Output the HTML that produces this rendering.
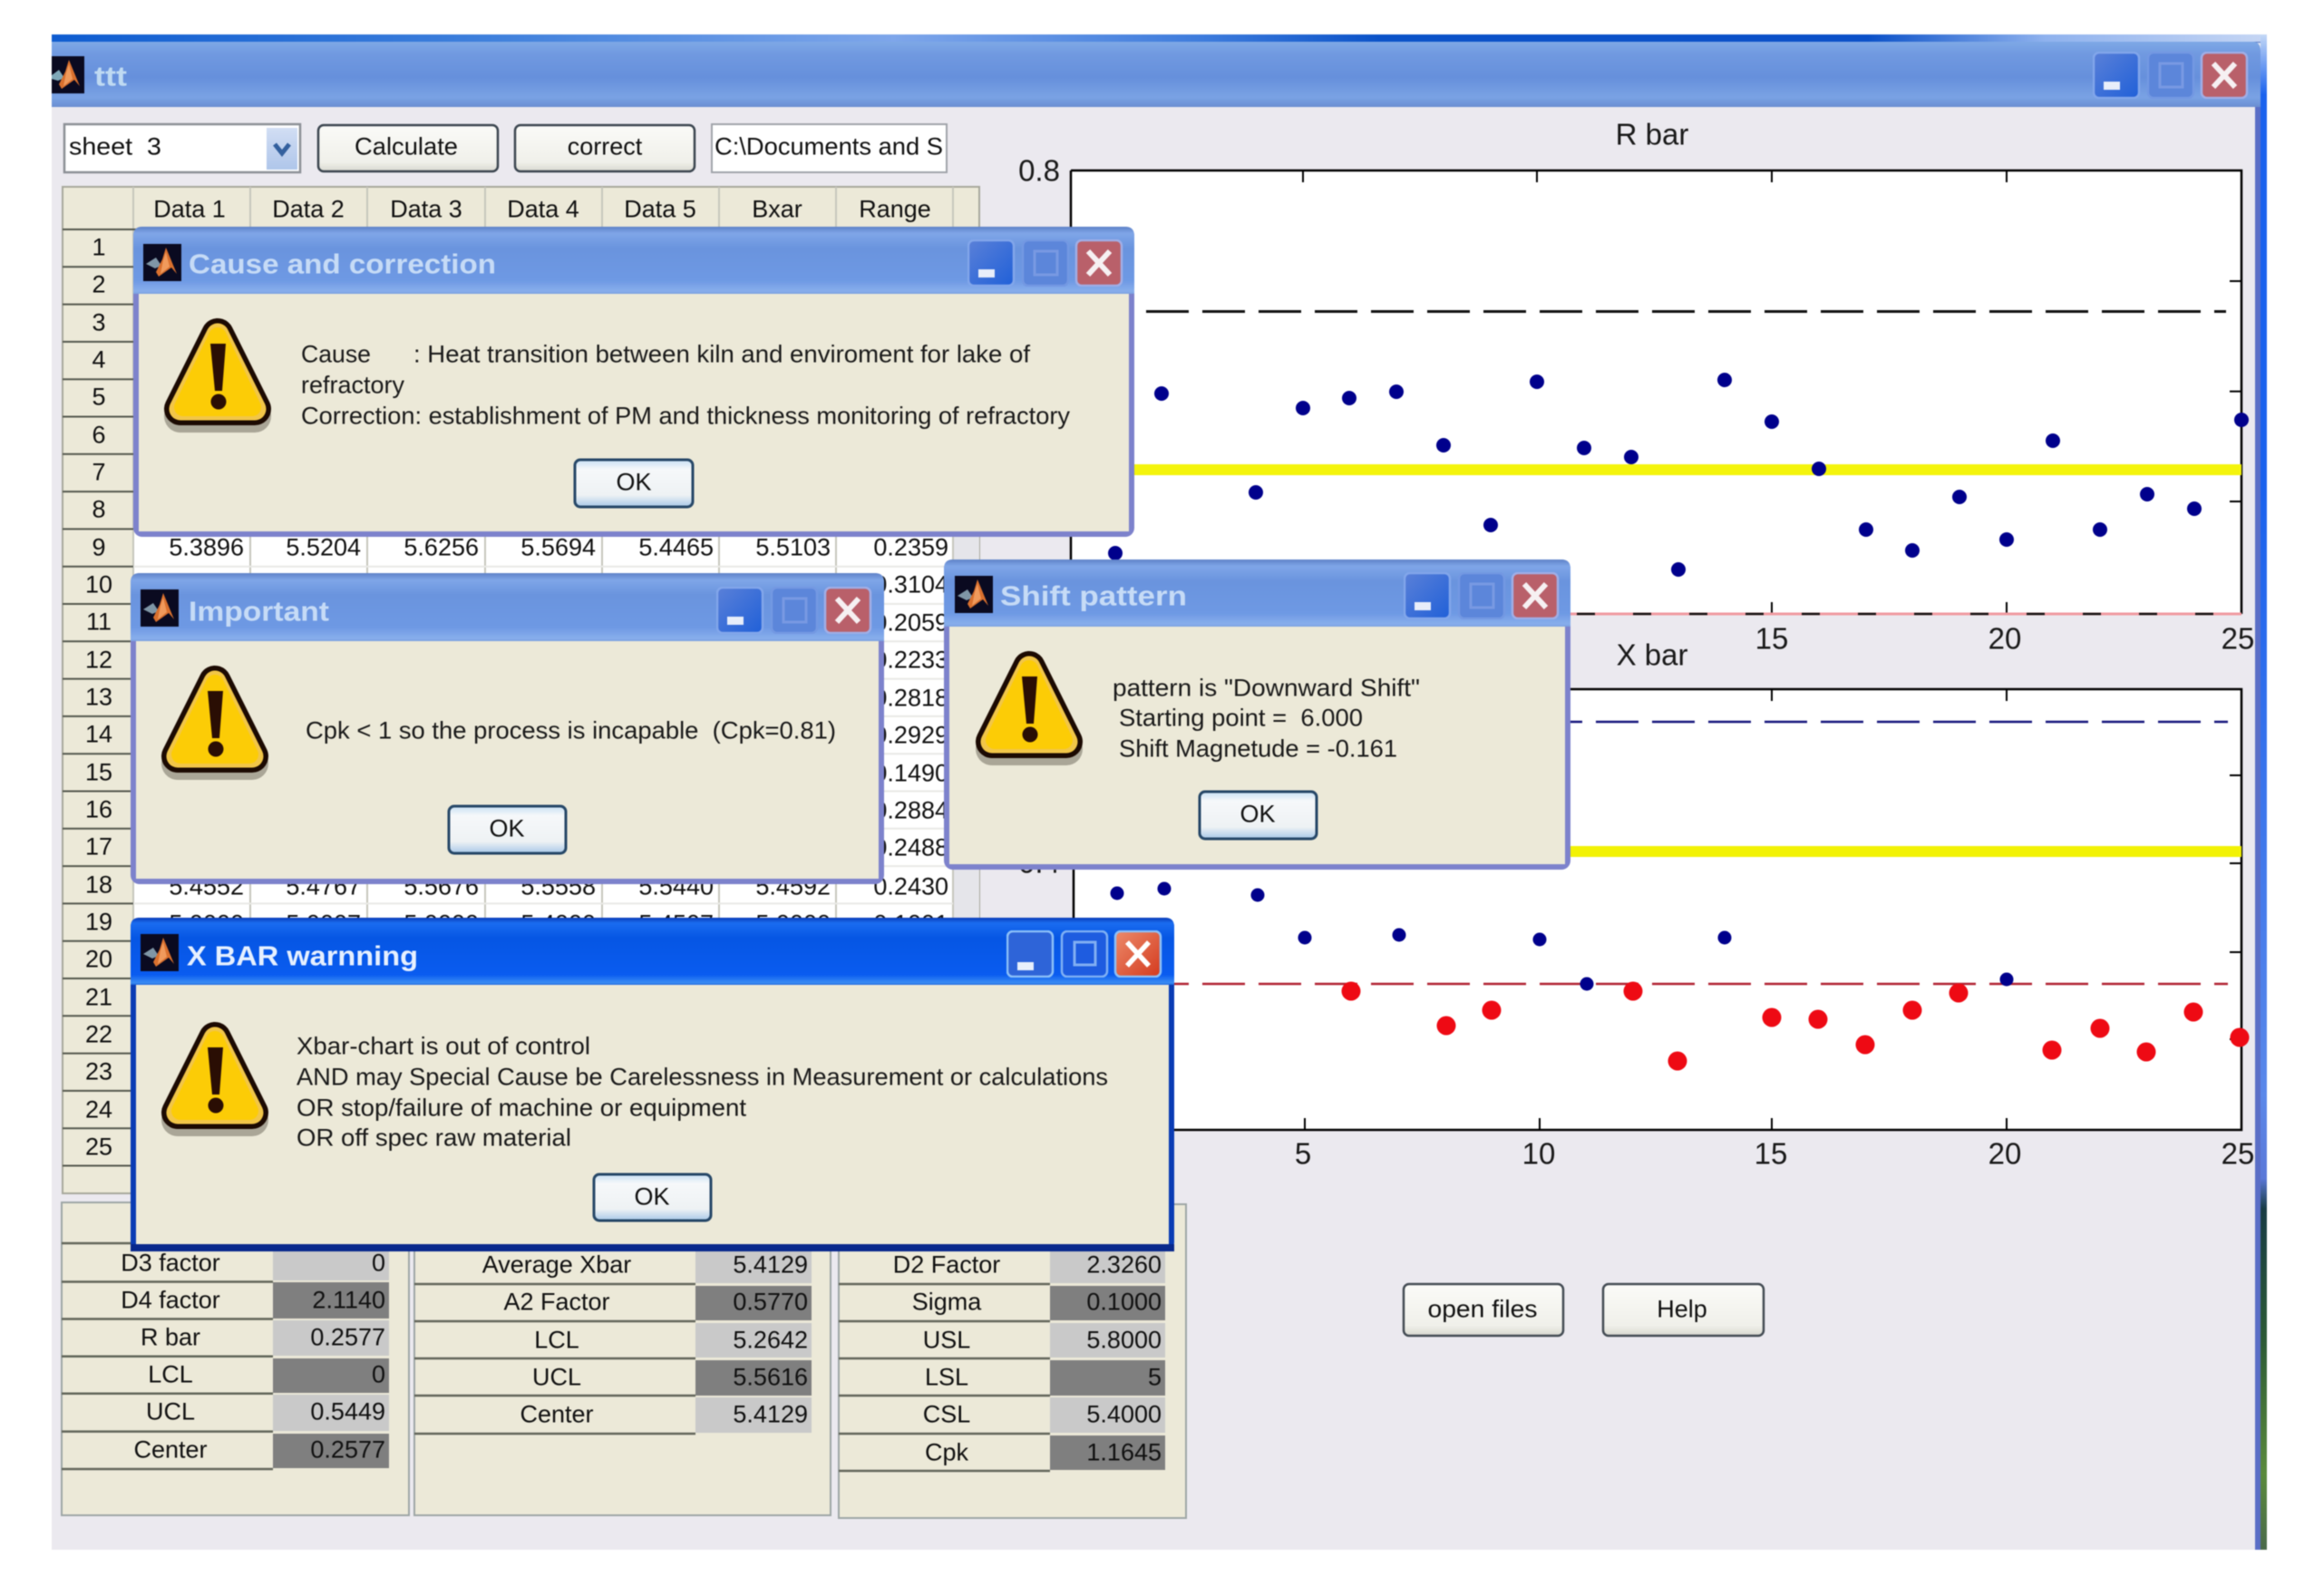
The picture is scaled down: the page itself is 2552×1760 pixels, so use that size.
<!DOCTYPE html>
<html><head><meta charset="utf-8"><title>ttt</title>
<style>
html,body{margin:0;padding:0;background:#fff}
svg{display:block;filter:blur(.5px)}
text{font-family:"Liberation Sans",sans-serif;fill:#111;transform:translateY(-1.5px)}
.t27{font-size:27px}
.m{font-size:27px;text-anchor:middle}
.r{font-size:27px;text-anchor:end}
.a{font-size:33px;text-anchor:middle;fill:#1a1a1a}
.d{font-size:27px;fill:#1a1a1a}
.tt{font-size:31px;font-weight:bold;fill:#c6dbf6}
</style></head><body>
<svg xmlns="http://www.w3.org/2000/svg" width="2552" height="1760" viewBox="0 0 2552 1760">
<defs>
<linearGradient id="strip" x1="0" x2="1" y1="0" y2="0">
<stop offset="0" stop-color="#0e5cd0"/><stop offset=".2" stop-color="#3f80dc"/><stop offset=".38" stop-color="#7ea6ea"/><stop offset=".52" stop-color="#3d7bdc"/><stop offset=".6" stop-color="#0a52c8"/><stop offset=".82" stop-color="#0a50c8"/><stop offset=".9" stop-color="#8fb2ee"/><stop offset="1" stop-color="#c6d6f4"/>
</linearGradient>
<linearGradient id="tMain" x1="0" x2="0" y1="0" y2="1">
<stop offset="0" stop-color="#7ea8e6"/><stop offset=".2" stop-color="#7099e0"/><stop offset=".55" stop-color="#6690dc"/><stop offset=".85" stop-color="#7aa2e4"/><stop offset="1" stop-color="#6a8ed2"/>
</linearGradient>
<linearGradient id="tFade" x1="0" x2="0" y1="0" y2="1">
<stop offset="0" stop-color="#5f82c8"/><stop offset=".1" stop-color="#7fa6e8"/><stop offset=".32" stop-color="#6a94de"/><stop offset=".8" stop-color="#6e99e4"/><stop offset=".96" stop-color="#88aeec"/><stop offset="1" stop-color="#7ba0e0"/>
</linearGradient>
<linearGradient id="tAct" x1="0" x2="0" y1="0" y2="1">
<stop offset="0" stop-color="#0a3cb8"/><stop offset=".08" stop-color="#1a6cf0"/><stop offset=".3" stop-color="#0656e4"/><stop offset=".85" stop-color="#0a5cf0"/><stop offset=".97" stop-color="#3a8cf4"/><stop offset="1" stop-color="#1e66dc"/>
</linearGradient>
<linearGradient id="btn" x1="0" x2="0" y1="0" y2="1">
<stop offset="0" stop-color="#fbfbf8"/><stop offset=".8" stop-color="#f0f0ea"/><stop offset="1" stop-color="#d8d8d0"/>
</linearGradient>
<linearGradient id="ok" x1="0" x2="0" y1="0" y2="1">
<stop offset="0" stop-color="#c8e0f4"/><stop offset=".2" stop-color="#f6f8fa"/><stop offset=".75" stop-color="#eef2f4"/><stop offset="1" stop-color="#a8c8e8"/>
</linearGradient>
<linearGradient id="minF" x1="0" x2="1" y1="0" y2="1">
<stop offset="0" stop-color="#5a80d8"/><stop offset="1" stop-color="#2060d8"/>
</linearGradient>
<linearGradient id="closeA" x1="0" x2="1" y1="0" y2="1">
<stop offset="0" stop-color="#ec8a6a"/><stop offset="1" stop-color="#d43a1e"/>
</linearGradient>
<linearGradient id="edge" x1="0" x2="0" y1="0" y2="1">
<stop offset="0" stop-color="#c4d8f6"/><stop offset=".04" stop-color="#1a62ee"/><stop offset=".3" stop-color="#1a62ee"/><stop offset=".7" stop-color="#5a88ea"/><stop offset=".755" stop-color="#5a78d8"/><stop offset=".775" stop-color="#183c44"/><stop offset=".86" stop-color="#2c5a36"/><stop offset=".95" stop-color="#5a8a3c"/><stop offset="1" stop-color="#4a6a4a"/>
</linearGradient>
<linearGradient id="chev" x1="0" x2="0" y1="0" y2="1">
<stop offset="0" stop-color="#d2def4"/><stop offset="1" stop-color="#afc6ea"/>
</linearGradient>
<symbol id="warn" viewBox="0 0 124 130" width="124" height="130" overflow="visible">
<path d="M59 25L18 108H100Z" fill="#8f8b7c" stroke="#8f8b7c" stroke-width="36" stroke-linejoin="round" opacity=".7"/>
<path d="M59 18L18 100H100Z" fill="#1c0a02" stroke="#1c0a02" stroke-width="36" stroke-linejoin="round"/>
<path d="M59 18L18 100H100Z" fill="#f2c648" stroke="#f2c648" stroke-width="25" stroke-linejoin="round"/>
<path d="M59 20L21 98H97Z" fill="#fccc06" stroke="#fccc06" stroke-width="20" stroke-linejoin="round"/>
<path d="M51 28H68L64 80H56Z" fill="#2a0e04"/>
<circle cx="60" cy="92" r="8.5" fill="#2a0e04"/>
</symbol>
<symbol id="logo" viewBox="0 0 42 41" width="42" height="41">
<rect width="42" height="41" fill="#0a0a20"/>
<path d="M3 22L14 15L20 24L13 27Z" fill="#7f96a6"/>
<path d="M25 4L37 33L31 26L17 36L14 31L21 17Z" fill="#d9702e"/>
<path d="M25 9L29 25L19 33L22 18Z" fill="#f09a5c"/>
</symbol>
<symbol id="logoC" viewBox="6 0 36 41" width="36" height="41">
<rect x="0" width="42" height="41" fill="#0a0a20"/>
<path d="M6 21L14 15L20 24L13 27L6 25Z" fill="#7fa8b8"/>
<path d="M25 4L37 33L31 26L17 36L14 31L21 17Z" fill="#d9702e"/>
<path d="M25 9L29 25L19 33L22 18Z" fill="#f09a5c"/>
</symbol>
<symbol id="ctlF" viewBox="0 0 172 52" width="172" height="52">
<rect x="1" y="1" width="50" height="50" rx="6" fill="url(#minF)" stroke="#82a6ea" stroke-width="2.5"/>
<rect x="12" y="33" width="18" height="9" fill="#e8eefa"/>
<rect x="61" y="1" width="50" height="50" rx="6" fill="#5c86da" stroke="#7398e2" stroke-width="2.5"/>
<rect x="74" y="13" width="25" height="26" fill="none" stroke="#7899e2" stroke-width="3"/>
<rect x="120" y="1" width="50" height="50" rx="6" fill="#b9606a" stroke="#a0aee6" stroke-width="2.5"/>
<path d="M133 13L157 39M157 13L133 39" stroke="#f6f0f2" stroke-width="6" fill="none"/>
</symbol>
<symbol id="ctlA" viewBox="0 0 172 52" width="172" height="52">
<rect x="1" y="1" width="50" height="50" rx="6" fill="#2e64d8" stroke="#8cc0f8" stroke-width="2.5"/>
<rect x="12" y="35" width="18" height="9" fill="#e8f0fc"/>
<rect x="61" y="1" width="50" height="50" rx="6" fill="#1e5ce0" stroke="#7fb0f4" stroke-width="2.5"/>
<rect x="75" y="13" width="23" height="25" fill="none" stroke="#80aef2" stroke-width="3"/>
<rect x="120" y="1" width="50" height="50" rx="6" fill="url(#closeA)" stroke="#8cc0f8" stroke-width="2.5"/>
<path d="M133 13L157 39M157 13L133 39" stroke="#fff" stroke-width="5.5" fill="none"/>
</symbol>
</defs>

<!-- main window -->
<rect x="57" y="38" width="2443" height="1671" fill="#ebe9ef"/>
<rect x="57" y="38" width="2443" height="10" fill="url(#strip)"/>
<rect x="2493" y="38" width="7" height="1671" fill="url(#edge)"/>
<rect x="57" y="46" width="2436" height="1" fill="#5a7cc4"/>
<path d="M57 46H2484Q2493 46 2493 56V118H57Z" fill="url(#tMain)"/>
<use href="#logoC" x="57" y="62"/>
<text x="104" y="96" font-size="31" font-weight="bold" style="fill:#bfdaf2" textLength="36" lengthAdjust="spacingAndGlyphs">ttt</text>
<use href="#ctlF" x="2308" y="57"/>

<!-- top controls -->
<rect x="71" y="137" width="260" height="53" fill="#fff" stroke="#8c9096" stroke-width="2.5"/>
<text x="76" y="172" class="t27" textLength="102" lengthAdjust="spacingAndGlyphs" xml:space="preserve">sheet  3</text>
<rect x="294" y="141" width="34" height="46" fill="url(#chev)"/>
<path d="M303 159L311 169L319 159" fill="none" stroke="#33609e" stroke-width="5"/>
<rect x="351" y="138" width="198" height="51" rx="6" fill="url(#btn)" stroke="#3c4650" stroke-width="2.5"/>
<text x="448" y="172" class="m" textLength="114" lengthAdjust="spacingAndGlyphs">Calculate</text>
<rect x="568" y="138" width="198" height="51" rx="6" fill="url(#btn)" stroke="#3c4650" stroke-width="2.5"/>
<text x="667" y="172" class="m">correct</text>
<rect x="785" y="137" width="259" height="53" fill="#fff" stroke="#a0a4aa" stroke-width="2"/>
<text x="788" y="172" class="t27" textLength="252" lengthAdjust="spacingAndGlyphs">C:\Documents and S</text>

<!-- table -->
<rect x="69" y="206" width="1011" height="1110" fill="#ece9d8" stroke="#a8a89c" stroke-width="2"/>
<rect x="147" y="254" width="904" height="1032" fill="#fff"/>
<rect x="1051" y="254" width="29" height="1032" fill="#e5e5ea"/>
<path d="M147 206V1316M276 206V1286M405 206V1286M535 206V1286M664 206V1286M793 206V1286M922 206V1286M1051 206V1286" stroke="#c6c6bc" stroke-width="2" fill="none"/>
<path d="M147 624.7H1051M147 666H1051M147 707.3H1051M147 748.6H1051M147 789.9H1051M147 831.2H1051M147 872.5H1051M147 913.8H1051M147 955.1H1051M147 996.4H1051" stroke="#e9e9e6" stroke-width="2" fill="none"/>
<path d="M69 253H1080M69 294.3H147M69 335.6H147M69 376.9H147M69 418.2H147M69 459.5H147M69 500.8H147M69 542.1H147M69 583.4H147M69 624.7H147M69 666H147M69 707.3H147M69 748.6H147M69 789.9H147M69 831.2H147M69 872.5H147M69 913.8H147M69 955.1H147M69 996.4H147M69 1037.7H147M69 1079H147M69 1120.3H147M69 1161.6H147M69 1202.9H147M69 1244.2H147M69 1285.5H147" stroke="#54584e" stroke-width="2" fill="none"/>
<text x="209" y="241" class="m">Data 1</text><text x="340" y="241" class="m">Data 2</text><text x="470" y="241" class="m">Data 3</text><text x="599" y="241" class="m">Data 4</text><text x="728" y="241" class="m">Data 5</text><text x="857" y="241" class="m">Bxar</text><text x="987" y="241" class="m">Range</text>
<g class="rows">
<text x="109" y="283" class="m">1</text><text x="109" y="324" class="m">2</text><text x="109" y="366" class="m">3</text><text x="109" y="407" class="m">4</text><text x="109" y="448" class="m">5</text><text x="109" y="490" class="m">6</text><text x="109" y="531" class="m">7</text><text x="109" y="572" class="m">8</text><text x="109" y="614" class="m">9</text><text x="109" y="655" class="m">10</text><text x="109" y="696" class="m">11</text><text x="109" y="738" class="m">12</text><text x="109" y="779" class="m">13</text><text x="109" y="820" class="m">14</text><text x="109" y="862" class="m">15</text><text x="109" y="903" class="m">16</text><text x="109" y="944" class="m">17</text><text x="109" y="986" class="m">18</text><text x="109" y="1027" class="m">19</text><text x="109" y="1068" class="m">20</text><text x="109" y="1110" class="m">21</text><text x="109" y="1151" class="m">22</text><text x="109" y="1192" class="m">23</text><text x="109" y="1234" class="m">24</text><text x="109" y="1275" class="m">25</text>
</g>
<text x="269" y="614" class="r">5.3896</text><text x="398" y="614" class="r">5.5204</text><text x="528" y="614" class="r">5.6256</text><text x="657" y="614" class="r">5.5694</text><text x="787" y="614" class="r">5.4465</text><text x="916" y="614" class="r">5.5103</text><text x="1046" y="614" class="r">0.2359</text>
<text x="1046" y="655" class="r">0.3104</text><text x="1046" y="697" class="r">0.2059</text><text x="1046" y="738" class="r">0.2233</text><text x="1046" y="780" class="r">0.2818</text><text x="1046" y="821" class="r">0.2929</text><text x="1046" y="863" class="r">0.1490</text><text x="1046" y="904" class="r">0.2884</text><text x="1046" y="945" class="r">0.2488</text>
<text x="269" y="988" class="r">5.4552</text><text x="398" y="988" class="r">5.4767</text><text x="528" y="988" class="r">5.5676</text><text x="657" y="988" class="r">5.5558</text><text x="787" y="988" class="r">5.5440</text><text x="916" y="988" class="r">5.4592</text><text x="1046" y="988" class="r">0.2430</text>
<text x="269" y="1029" class="r">5.0000</text><text x="398" y="1029" class="r">5.0007</text><text x="528" y="1029" class="r">5.0000</text><text x="657" y="1029" class="r">5.4000</text><text x="787" y="1029" class="r">5.4507</text><text x="916" y="1029" class="r">5.0000</text><text x="1046" y="1029" class="r">0.1001</text>

<!-- bottom panels -->
<rect x="68" y="1326" width="383" height="345" fill="#ece9d8" stroke="#9ea6a6" stroke-width="2"/>
<rect x="457" y="1326" width="459" height="345" fill="#ece9d8" stroke="#9ea6a6" stroke-width="2"/>
<rect x="925" y="1328" width="383" height="346" fill="#ece9d8" stroke="#9ea6a6" stroke-width="2"/>
<g>
<rect x="301" y="1371" width="128" height="41" fill="#c9c9c9"/><rect x="301" y="1414" width="128" height="40" fill="#7f7f7f"/><rect x="301" y="1456" width="128" height="39" fill="#c9c9c9"/><rect x="301" y="1498" width="128" height="38" fill="#7f7f7f"/><rect x="301" y="1538" width="128" height="40" fill="#c9c9c9"/><rect x="301" y="1581" width="128" height="38" fill="#7f7f7f"/>
<path d="M68 1371H301M68 1413.5H301M68 1454.5H301M68 1495.7H301M68 1536.8H301M68 1578.6H301M68 1620H301" stroke="#62665a" stroke-width="2.5" fill="none"/>
<text x="188" y="1403" class="m">D3 factor</text><text x="188" y="1444" class="m">D4 factor</text><text x="188" y="1485" class="m">R bar</text><text x="188" y="1526" class="m">LCL</text><text x="188" y="1567" class="m">UCL</text><text x="188" y="1609" class="m">Center</text>
<text x="425" y="1403" class="r">0</text><text x="425" y="1444" class="r">2.1140</text><text x="425" y="1485" class="r">0.2577</text><text x="425" y="1526" class="r">0</text><text x="425" y="1567" class="r">0.5449</text><text x="425" y="1609" class="r">0.2577</text>

<rect x="767" y="1375" width="128" height="40" fill="#c9c9c9"/><rect x="767" y="1418" width="128" height="38" fill="#7f7f7f"/><rect x="767" y="1459" width="128" height="38" fill="#c9c9c9"/><rect x="767" y="1500" width="128" height="39" fill="#7f7f7f"/><rect x="767" y="1541" width="128" height="39" fill="#c9c9c9"/>
<path d="M457 1416H767M457 1457H767M457 1498H767M457 1539H767M457 1581H767" stroke="#62665a" stroke-width="2.5" fill="none"/>
<text x="614" y="1405" class="m">Average Xbar</text><text x="614" y="1446" class="m">A2 Factor</text><text x="614" y="1488" class="m">LCL</text><text x="614" y="1529" class="m">UCL</text><text x="614" y="1570" class="m">Center</text>
<text x="891" y="1405" class="r">5.4129</text><text x="891" y="1446" class="r">0.5770</text><text x="891" y="1488" class="r">5.2642</text><text x="891" y="1529" class="r">5.5616</text><text x="891" y="1570" class="r">5.4129</text>

<rect x="1158" y="1375" width="127" height="40" fill="#c9c9c9"/><rect x="1158" y="1418" width="127" height="38" fill="#7f7f7f"/><rect x="1158" y="1459" width="127" height="38" fill="#c9c9c9"/><rect x="1158" y="1500" width="127" height="39" fill="#7f7f7f"/><rect x="1158" y="1541" width="127" height="39" fill="#c9c9c9"/><rect x="1158" y="1583" width="127" height="38" fill="#7f7f7f"/>
<path d="M925 1416H1158M925 1457H1158M925 1498H1158M925 1539H1158M925 1581H1158M925 1622H1158" stroke="#62665a" stroke-width="2.5" fill="none"/>
<text x="1044" y="1405" class="m">D2 Factor</text><text x="1044" y="1446" class="m">Sigma</text><text x="1044" y="1488" class="m">USL</text><text x="1044" y="1529" class="m">LSL</text><text x="1044" y="1570" class="m">CSL</text><text x="1044" y="1612" class="m">Cpk</text>
<text x="1281" y="1405" class="r">2.3260</text><text x="1281" y="1446" class="r">0.1000</text><text x="1281" y="1488" class="r">5.8000</text><text x="1281" y="1529" class="r">5</text><text x="1281" y="1570" class="r">5.4000</text><text x="1281" y="1612" class="r">1.1645</text>
</g>

<!-- R bar chart -->
<text x="1822" y="161" class="a">R bar</text>
<text x="1146" y="201" class="a">0.8</text>
<rect x="1181" y="188" width="1291" height="489" fill="#fff"/>
<path d="M1181 188H2472V677M1181 188V677" fill="none" stroke="#000" stroke-width="2.5"/>
<path d="M1437 188V201M1695 188V201M1954 188V201M2213 188V201M1954 677V664M2213 677V664M2472 310H2459M2472 431.6H2459M2472 553H2459" stroke="#000" stroke-width="2" fill="none"/>
<path d="M1190 343.5H2455" stroke="#111" stroke-width="3" stroke-dasharray="47 15" stroke-dashoffset="-12" fill="none"/>
<rect x="1181" y="512" width="1291" height="12" fill="#f4f40c"/>
<path d="M1181 677H2472" stroke="#f09aa0" stroke-width="3" fill="none"/>
<path d="M1181 677H2472" stroke="#111" stroke-width="2.5" stroke-dasharray="20 42" fill="none"/>
<g fill="#00008c">
<circle cx="1230" cy="610" r="8"/><circle cx="1281" cy="434" r="8"/><circle cx="1385" cy="543" r="8"/><circle cx="1437" cy="450" r="8"/><circle cx="1488" cy="439" r="8"/><circle cx="1540" cy="432" r="8"/><circle cx="1592" cy="491" r="8"/><circle cx="1644" cy="579" r="8"/><circle cx="1695" cy="421" r="8"/><circle cx="1747" cy="494" r="8"/><circle cx="1799" cy="504" r="8"/><circle cx="1851" cy="628" r="8"/><circle cx="1902" cy="419" r="8"/><circle cx="1954" cy="465" r="8"/><circle cx="2006" cy="517" r="8"/><circle cx="2058" cy="584" r="8"/><circle cx="2109" cy="607" r="8"/><circle cx="2161" cy="548" r="8"/><circle cx="2213" cy="595" r="8"/><circle cx="2264" cy="486" r="8"/><circle cx="2316" cy="584" r="8"/><circle cx="2368" cy="545" r="8"/><circle cx="2420" cy="561" r="8"/><circle cx="2472" cy="463" r="8"/>
</g>
<text x="1954" y="717" class="a">15</text><text x="2211" y="717" class="a">20</text><text x="2468" y="717" class="a">25</text>

<!-- X bar chart -->
<text x="1822" y="735" class="a">X bar</text>
<text x="1146" y="964" class="a">0.4</text>
<rect x="1184" y="760" width="1288" height="486" fill="#fff"/>
<path d="M1184 760H2472V1246H1184Z" fill="none" stroke="#000" stroke-width="2.5"/>
<path d="M1439 1246V1233M1698 1246V1233M1954 1246V1233M2213 1246V1233M1954 760V773M2213 760V773M2472 855H2459M2472 952H2459M2472 1050H2459M2472 1146H2459" stroke="#000" stroke-width="2" fill="none"/>
<path d="M1190 796H2457" stroke="#14147c" stroke-width="2.5" stroke-dasharray="47 15" stroke-dashoffset="-12" fill="none"/>
<rect x="1184" y="933" width="1288" height="12" fill="#f2f204"/>
<path d="M1190 1085H2457" stroke="#b02030" stroke-width="2.5" stroke-dasharray="47 15" stroke-dashoffset="-12" fill="none"/>
<g fill="#00008c">
<circle cx="1232" cy="985" r="7.5"/><circle cx="1284" cy="980" r="7.5"/><circle cx="1387" cy="987" r="7.5"/><circle cx="1439" cy="1034" r="7.5"/><circle cx="1543" cy="1031" r="7.5"/><circle cx="1698" cy="1036" r="7.5"/><circle cx="1750" cy="1085" r="7.5"/><circle cx="1902" cy="1034" r="7.5"/><circle cx="2213" cy="1080" r="7.5"/>
</g>
<g fill="#ee0a14">
<circle cx="1490" cy="1093" r="10.5"/><circle cx="1595" cy="1131" r="10.5"/><circle cx="1645" cy="1114" r="10.5"/><circle cx="1801" cy="1093" r="10.5"/><circle cx="1850" cy="1170" r="10.5"/><circle cx="1954" cy="1122" r="10.5"/><circle cx="2005" cy="1124" r="10.5"/><circle cx="2057" cy="1152" r="10.5"/><circle cx="2109" cy="1114" r="10.5"/><circle cx="2160" cy="1095" r="10.5"/><circle cx="2263" cy="1158" r="10.5"/><circle cx="2316" cy="1134" r="10.5"/><circle cx="2367" cy="1160" r="10.5"/><circle cx="2419" cy="1116" r="10.5"/><circle cx="2470" cy="1144" r="10.5"/>
</g>
<text x="1437" y="1285" class="a">5</text><text x="1697" y="1285" class="a">10</text><text x="1953" y="1285" class="a">15</text><text x="2211" y="1285" class="a">20</text><text x="2468" y="1285" class="a">25</text>
<rect x="2487" y="118" width="6" height="1591" fill="#5a6ec6"/>

<!-- bottom right buttons -->
<rect x="1548" y="1416" width="176" height="57" rx="6" fill="url(#btn)" stroke="#444c54" stroke-width="2.5"/>
<text x="1635" y="1454" class="m" textLength="121" lengthAdjust="spacingAndGlyphs">open files</text>
<rect x="1768" y="1416" width="177" height="57" rx="6" fill="url(#btn)" stroke="#444c54" stroke-width="2.5"/>
<text x="1855" y="1454" class="m">Help</text>

<!-- Cause and correction -->
<rect x="147" y="250" width="1104" height="342" rx="10" fill="#7d82cc"/>
<rect x="153" y="324" width="1092" height="262" fill="#ece9d8"/>
<path d="M147 324V260Q147 250 157 250H1241Q1251 250 1251 260V324Z" fill="url(#tFade)"/>
<use href="#logo" x="158" y="269"/>
<text x="208" y="303" class="tt" textLength="339" lengthAdjust="spacingAndGlyphs">Cause and correction</text>
<use href="#ctlF" x="1067" y="264"/>
<use href="#warn" x="181" y="351"/>
<text x="332" y="401" class="d" textLength="77" lengthAdjust="spacingAndGlyphs">Cause</text>
<text x="456" y="401" class="d" textLength="680" lengthAdjust="spacingAndGlyphs">: Heat transition between kiln and enviroment for lake of</text>
<text x="332" y="435" class="d" textLength="114" lengthAdjust="spacingAndGlyphs">refractory</text>
<text x="332" y="469" class="d" textLength="848" lengthAdjust="spacingAndGlyphs">Correction: establishment of PM and thickness monitoring of refractory</text>
<rect x="634" y="507" width="130" height="52" rx="6" fill="url(#ok)" stroke="#274868" stroke-width="3"/>
<text x="699" y="542" class="m">OK</text>

<!-- Important -->
<rect x="144" y="632" width="831" height="343" rx="10" fill="#7d82cc"/>
<rect x="150" y="707" width="819" height="262" fill="#ece9d8"/>
<path d="M144 707V642Q144 632 154 632H965Q975 632 975 642V707Z" fill="url(#tFade)"/>
<use href="#logo" x="155" y="650"/>
<text x="208" y="686" class="tt" textLength="155" lengthAdjust="spacingAndGlyphs">Important</text>
<use href="#ctlF" x="790" y="647"/>
<use href="#warn" x="178" y="734"/>
<text x="337" y="816" class="d" textLength="585" lengthAdjust="spacingAndGlyphs" xml:space="preserve">Cpk &lt; 1 so the process is incapable  (Cpk=0.81)</text>
<rect x="495" y="889" width="129" height="52" rx="6" fill="url(#ok)" stroke="#274868" stroke-width="3"/>
<text x="559" y="924" class="m">OK</text>

<!-- Shift pattern -->
<rect x="1041" y="617" width="691" height="342" rx="10" fill="#7d82cc"/>
<rect x="1047" y="691" width="679" height="262" fill="#ece9d8"/>
<path d="M1041 691V627Q1041 617 1051 617H1722Q1732 617 1732 627V691Z" fill="url(#tFade)"/>
<use href="#logo" x="1053" y="635"/>
<text x="1103" y="669" class="tt" textLength="206" lengthAdjust="spacingAndGlyphs">Shift pattern</text>
<use href="#ctlF" x="1548" y="631"/>
<use href="#warn" x="1076" y="718"/>
<text x="1227" y="769" class="d" textLength="339" lengthAdjust="spacingAndGlyphs">pattern is "Downward Shift"</text>
<text x="1234" y="802" class="d" textLength="269" lengthAdjust="spacingAndGlyphs" xml:space="preserve">Starting point =  6.000</text>
<text x="1234" y="836" class="d" textLength="307" lengthAdjust="spacingAndGlyphs">Shift Magnetude = -0.161</text>
<rect x="1323" y="873" width="129" height="52" rx="6" fill="url(#ok)" stroke="#274868" stroke-width="3"/>
<text x="1387" y="908" class="m">OK</text>

<!-- X BAR warning -->
<rect x="144" y="1012" width="1151" height="368" rx="10" fill="#0a3cb4"/>
<rect x="150" y="1086" width="1139" height="286" fill="#ece9d8"/>
<rect x="144" y="1372" width="1151" height="8" fill="#08288c"/>
<path d="M144 1086V1022Q144 1012 154 1012H1285Q1295 1012 1295 1022V1086Z" fill="url(#tAct)"/>
<use href="#logo" x="155" y="1030"/>
<text x="206" y="1066" class="tt" style="fill:#e6f0ff" textLength="255" lengthAdjust="spacingAndGlyphs">X BAR warnning</text>
<use href="#ctlA" x="1110" y="1026"/>
<use href="#warn" x="178" y="1127"/>
<text x="327" y="1164" class="d" textLength="324" lengthAdjust="spacingAndGlyphs">Xbar-chart is out of control</text>
<text x="327" y="1198" class="d" textLength="895" lengthAdjust="spacingAndGlyphs">AND may Special Cause be Carelessness in Measurement or calculations</text>
<text x="327" y="1232" class="d" textLength="496" lengthAdjust="spacingAndGlyphs">OR stop/failure of machine or equipment</text>
<text x="327" y="1265" class="d" textLength="303" lengthAdjust="spacingAndGlyphs">OR off spec raw material</text>
<rect x="655" y="1295" width="129" height="51" rx="6" fill="url(#ok)" stroke="#274868" stroke-width="3"/>
<text x="719" y="1330" class="m">OK</text>
</svg>
</body></html>
